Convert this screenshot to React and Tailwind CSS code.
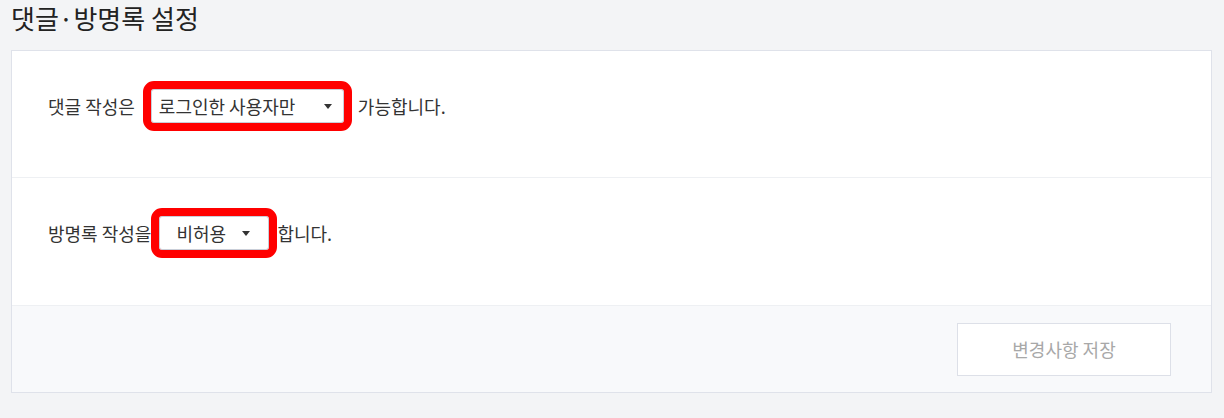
import React from "react";

const font = {
  fontFamily: '"Noto Sans CJK KR", "Noto Sans", sans-serif',
};

function SelectBox({ label, className, textClass, arrowClass }) {
  return (
    <div
      className={`flex h-[34px] items-center rounded-[3px] border border-[#c9ced8] bg-white outline-[8px] outline-[#ff0000] outline-solid ${className}`}
    >
      <span className={`text-[18px] text-[#333] ${textClass}`}>{label}</span>
      <span
        className={`ml-auto h-0 w-0 border-x-[4px] border-t-[5px] border-x-transparent border-t-[#333] ${arrowClass}`}
      />
    </div>
  );
}

export default function App() {
  return (
    <div className="h-[418px] w-[1224px] bg-[#f3f4f6] text-[#333]" style={font}>
      <div className="flex h-[50px] items-start pl-[11px]">
        <h1 className="text-[26px] leading-[36px] font-normal text-[#222]">
          댓글·방명록 설정
        </h1>
      </div>

      <div className="ml-[11px] w-[1201px] border border-[#dfe2ea] bg-white">
        <div className="h-[127px] border-b border-[#eef0f3] pl-[36px] pt-[38px]">
          <div className="flex h-[34px] items-center">
            <span className="text-[18px]">댓글 작성은</span>
            <SelectBox
              label="로그인한 사용자만"
              className="ml-[16px] w-[193px]"
              textClass="pl-[7px]"
              arrowClass="mr-[11px]"
            />
            <span className="ml-[14px] text-[18px]">가능합니다.</span>
          </div>
        </div>

        <div className="h-[128px] border-b border-[#eef0f3] pl-[36px] pt-[38px]">
          <div className="flex h-[34px] items-center">
            <span className="text-[18px]">방명록 작성을</span>
            <SelectBox
              label="비허용"
              className="ml-[8px] w-[110px]"
              textClass="pl-[16px]"
              arrowClass="mr-[18px]"
            />
            <span className="ml-[8px] text-[18px]">합니다.</span>
          </div>
        </div>

        <div className="flex h-[86px] items-start justify-end bg-[#f8f9fb] pr-[40px] pt-[17px]">
          <button className="h-[53px] w-[214px] border border-[#dde0e8] bg-white text-[18px] text-[#a8a8a8]">
            변경사항 저장
          </button>
        </div>
      </div>
    </div>
  );
}
